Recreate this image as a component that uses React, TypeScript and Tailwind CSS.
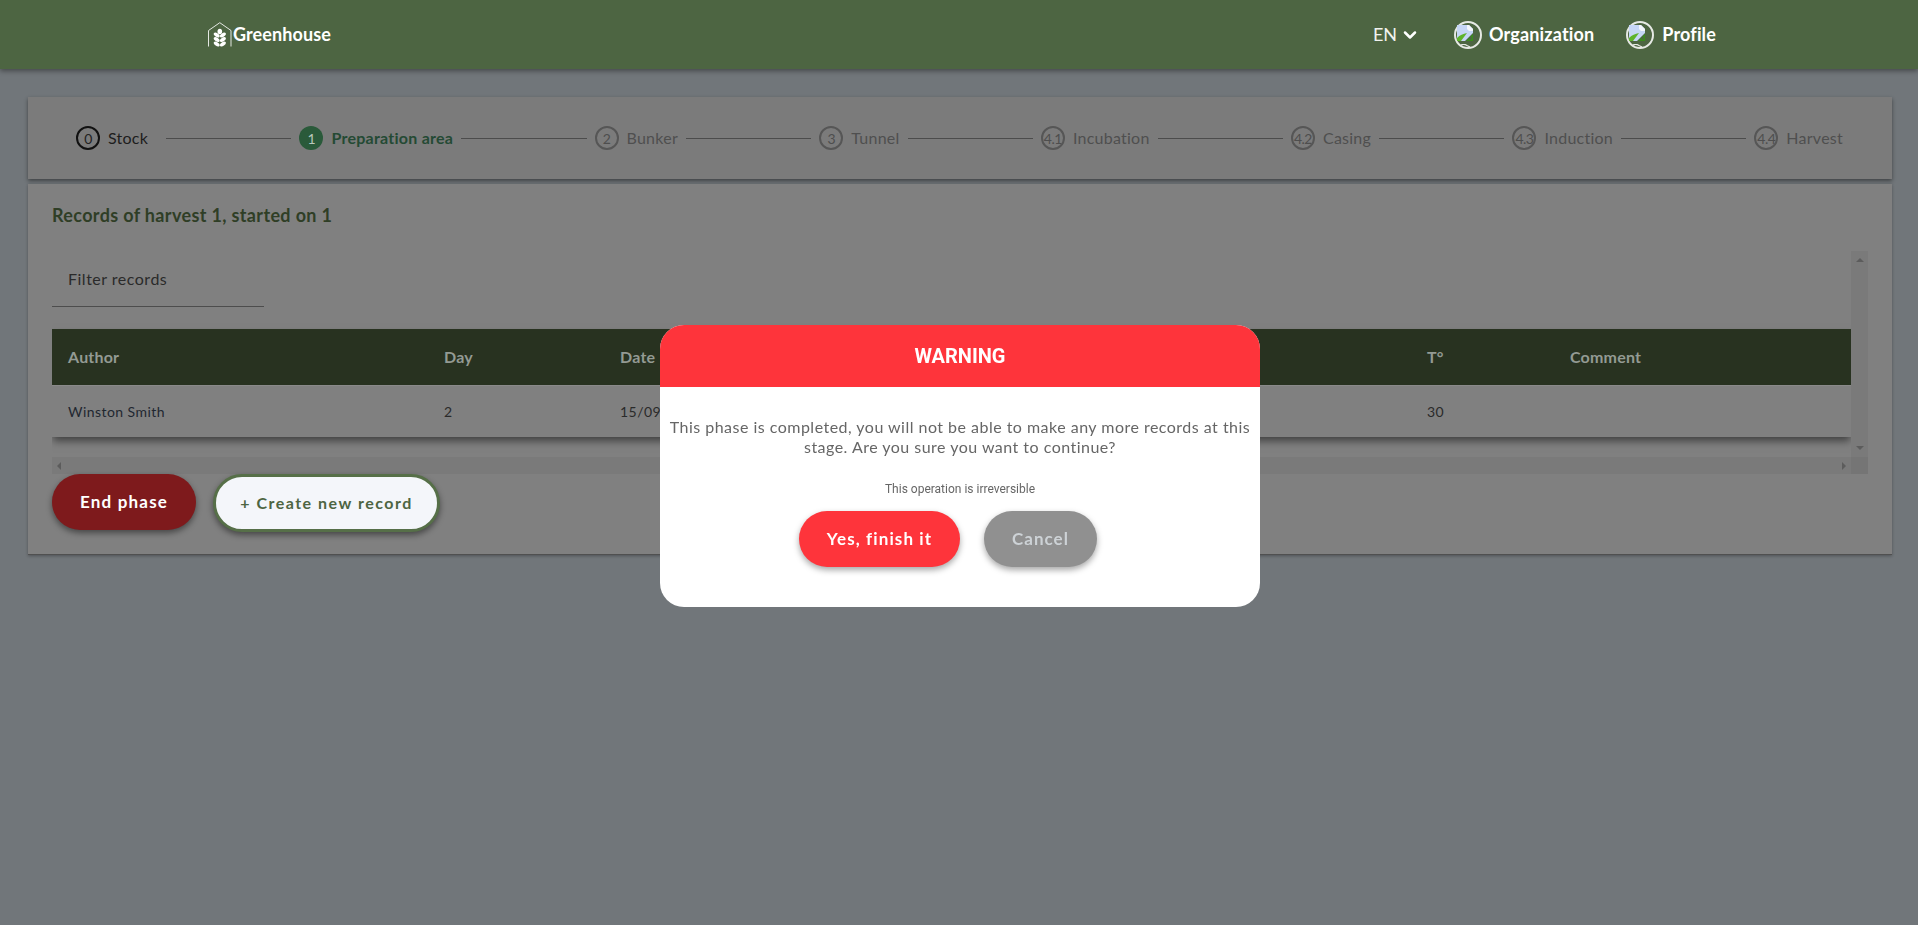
import { ChevronDown } from "lucide-react";

const steps = [
  { n: "0", label: "Stock", state: "done" },
  { n: "1", label: "Preparation area", state: "active" },
  { n: "2", label: "Bunker", state: "todo" },
  { n: "3", label: "Tunnel", state: "todo" },
  { n: "4.1", label: "Incubation", state: "todo" },
  { n: "4.2", label: "Casing", state: "todo" },
  { n: "4.3", label: "Induction", state: "todo" },
  { n: "4.4", label: "Harvest", state: "todo" },
];

function Logo() {
  const rows = [13, 17.5, 22];
  return (
    <svg width="24" height="25" viewBox="0 0 24 25" fill="none" className="shrink-0">
      <path d="M.5 24.500V8.500L11.800.7 23 8.500V24.500" stroke="#e4e8e2" strokeWidth="1" />
      <ellipse cx="11.800" cy="9.500" rx="2.300" ry="2.800" fill="#fff" />
      {rows.map((y) => (
        <g key={y} fill="#fff">
          <ellipse cx="8.700" cy={y} rx="3.300" ry="1.900" transform={`rotate(35 8.700 ${y})`} />
          <ellipse cx="14.900" cy={y} rx="3.300" ry="1.900" transform={`rotate(-35 14.900 ${y})`} />
        </g>
      ))}
    </svg>
  );
}

function BrokenAvatar() {
  return (
    <span className="relative block h-[28px] w-[28px] shrink-0 rounded-full border-2 border-[#e6e9e4]">
      <svg width="20" height="19" viewBox="0 0 20 19" className="absolute left-0 top-[1px]">
        <path d="M1 1h12l4 4v4l-8 8H1Z" fill="#c6d6f6" />
        <path d="M11 1h2l4 4v2h-4l-2-2Z" fill="#f3f6fd" />
        <path d="M1 17v-3c3-3 6-4 10-5l-6 8Z" fill="#5fb32c" />
        <path d="M17 10v7h-7Z" fill="#3b8a1f" />
        <path d="M13.500 13h2v2.500h-2Z" fill="#4d6542" />
      </svg>
      <svg width="10" height="4" viewBox="0 0 10 4" className="absolute bottom-[-1px] left-[5px]">
        <path d="M0 1c2-1 4-1 6 .5L9 3" stroke="#e6e9e4" strokeWidth="1.200" fill="none" />
      </svg>
    </span>
  );
}

function StepItem({ n, label, state }: { n: string; label: string; state: string }) {
  const circle =
    state === "active"
      ? "bg-[#2a5a3a] text-[#b9c9bd]"
      : state === "done"
        ? "border-2 border-[#111] text-[#222]"
        : "border-2 border-[#565656] text-[#4e4e4e]";
  const text =
    state === "active"
      ? "font-bold text-[#244a34]"
      : state === "done"
        ? "text-[#1d1d1d]"
        : "text-[#4f4f4f]";
  return (
    <div className={`flex shrink-0 items-center gap-2 pl-2 ${state === "done" ? "pr-[18px]" : "pr-2"}`}>
      <span
        className={`flex h-6 w-6 shrink-0 items-center justify-center overflow-hidden whitespace-nowrap rounded-full text-[14px] tracking-[-0.5px] ${circle}`}
      >
        {n}
      </span>
      <span className={`whitespace-nowrap text-[16px] tracking-[0.25px] ${text}`}>{label}</span>
    </div>
  );
}

function ScrollArrow({ dir }: { dir: "up" | "down" | "left" | "right" }) {
  const points = {
    up: "4,0 8,4 0,4",
    down: "0,0 8,0 4,4",
    left: "4,0 4,8 0,4",
    right: "0,0 4,4 0,8",
  }[dir];
  const size = dir === "up" || dir === "down" ? "w-2 h-1" : "w-1 h-2";
  return (
    <svg viewBox={dir === "up" || dir === "down" ? "0 0 8 4" : "0 0 4 8"} className={size}>
      <polygon points={points} fill="#5c5c5c" />
    </svg>
  );
}

function RecordsTable() {
  return (
    <div className="flex h-[223px] flex-col">
      <div className="flex min-h-0 flex-1">
        <div className="min-w-0 flex-1 overflow-hidden">
          <div className="flex h-[56px] w-[212px] items-center border-b border-[#4d4d4d] pl-4 text-[16px] tracking-[0.5px] text-[#2a2a2a]">
            Filter records
          </div>
          <table className="mt-[22px] w-full table-fixed border-collapse text-left shadow-[0_5px_8px_-1px_rgba(0,0,0,0.5)]">
            <colgroup>
              <col className="w-[376px]" />
              <col className="w-[176px]" />
              <col className="w-[807px]" />
              <col className="w-[143px]" />
            </colgroup>
            <thead>
              <tr className="h-[56px] bg-[#283220] text-[16px] font-bold tracking-[0.2px] text-[#939a93]">
                <th className="pl-4">Author</th>
                <th className="pl-4">Day</th>
                <th className="pl-4">Date</th>
                <th className="pl-4">T°</th>
                <th className="pl-4">Comment</th>
              </tr>
            </thead>
            <tbody>
              <tr className="h-[52px] border-t border-[#8a8a8a] text-[14px] tracking-[0.45px] text-[#2a2a2a]">
                <td className="pl-4 text-[#1f2730]">Winston Smith</td>
                <td className="pl-4">2</td>
                <td className="pl-4">15/09/2023</td>
                <td className="pl-4">30</td>
                <td className="pl-4"></td>
              </tr>
            </tbody>
          </table>
        </div>
        <div className="flex w-[17px] shrink-0 flex-col items-center justify-between bg-[#7a7a7a] py-[7px]">
          <ScrollArrow dir="up" />
          <ScrollArrow dir="down" />
        </div>
      </div>
      <div className="flex h-[17px] shrink-0">
        <div className="flex flex-1 items-center justify-between bg-[#7a7a7a] px-[5px]">
          <ScrollArrow dir="left" />
          <ScrollArrow dir="right" />
        </div>
        <div className="w-[17px] bg-[#757575]" />
      </div>
    </div>
  );
}

function WarningModal() {
  return (
    <div className="fixed left-[660px] top-[325px] z-20 flex h-[282px] w-[600px] flex-col overflow-hidden rounded-[24px] bg-white">
      <div className="flex h-[62px] shrink-0 items-center justify-center bg-[#fe343b] font-['Roboto',sans-serif] text-[20px] font-bold text-white">
        WARNING
      </div>
      <p className="mt-[30px] px-1 text-center text-[16px] leading-[20px] tracking-[0.48px] text-[#666]">
        This phase is completed, you will not be able to make any more records at this stage. Are
        you sure you want to continue?
      </p>
      <p className="mt-[25px] text-center font-['Roboto',sans-serif] text-[12px] leading-[14px] text-[#666]">
        This operation is irreversible
      </p>
      <div className="mt-[15px] flex justify-center gap-6 pr-6">
        <button className="h-14 w-[161px] rounded-full bg-[#fe343b] text-[17px] font-bold tracking-[1.1px] text-white shadow-[0_3px_6px_rgba(0,0,0,0.35)]">
          Yes, finish it
        </button>
        <button className="h-14 w-[113px] rounded-full bg-[#909090] text-[17px] font-bold tracking-[1px] text-[#cdd2d6] shadow-[0_3px_6px_rgba(0,0,0,0.35)]">
          Cancel
        </button>
      </div>
    </div>
  );
}

export default function App() {
  return (
    <div className="relative h-[925px] overflow-hidden bg-[#71767a] font-['Lato',sans-serif]">
      <header className="relative z-10 flex h-[69px] items-center justify-between bg-[#4d6542] pl-[208px] pr-[202px] text-white shadow-[0_2px_5px_rgba(0,0,0,0.4)]">
        <div className="flex items-center gap-[1px]">
          <Logo />
          <span className="text-[18px] font-bold tracking-[0.1px]">Greenhouse</span>
        </div>
        <nav className="flex items-center">
          <span className="text-[18px] text-[#f1f3ef]">EN</span>
          <ChevronDown className="ml-[3px] h-5 w-5" strokeWidth={3} />
          <span className="ml-[34px] flex items-center gap-[7px]">
            <BrokenAvatar />
            <span className="text-[18px] font-bold tracking-[0.15px]">Organization</span>
          </span>
          <span className="ml-[32px] flex items-center gap-[8px]">
            <BrokenAvatar />
            <span className="text-[18px] font-bold tracking-[0.15px]">Profile</span>
          </span>
        </nav>
      </header>

      <main className="pl-[28px] pr-[26px] pt-[28px]">
        <section className="flex h-[82px] items-center bg-[#7b7b7b] pl-[40px] pr-[41px] shadow-[0_2px_4px_rgba(0,0,0,0.45)]">
          {steps.map((s, i) => (
            <div key={s.n} className={i === 0 ? "flex items-center" : "contents"}>
              {i > 0 && <div className="h-px flex-1 bg-[#4c4c4c]" />}
              <StepItem n={s.n} label={s.label} state={s.state} />
            </div>
          ))}
        </section>

        <section className="mt-[5px] h-[371px] border-b border-[#505050] bg-[#808080] px-[24px] pt-[20px] shadow-[0_1px_3px_rgba(0,0,0,0.3)]">
          <h2 className="text-[18px] font-bold leading-[22px] tracking-[0.35px] text-[#2f3e26]">
            Records of harvest 1, started on 1
          </h2>
          <div className="mt-[25px]">
            <RecordsTable />
          </div>
          <div className="flex gap-[17px]">
            <button className="h-14 w-[144px] rounded-full bg-[#7e1a1c] text-[17px] font-bold tracking-[1.2px] text-white shadow-[0_3px_6px_rgba(0,0,0,0.45)]">
              End phase
            </button>
            <button className="h-[58px] w-[227px] rounded-full border-[3px] border-[#566f48] bg-[#f4f6fa] text-[16px] font-bold tracking-[1.5px] text-[#4d6542] shadow-[0_3px_6px_rgba(0,0,0,0.45)]">
              + Create new record
            </button>
          </div>
        </section>
      </main>

      <WarningModal />
    </div>
  );
}
